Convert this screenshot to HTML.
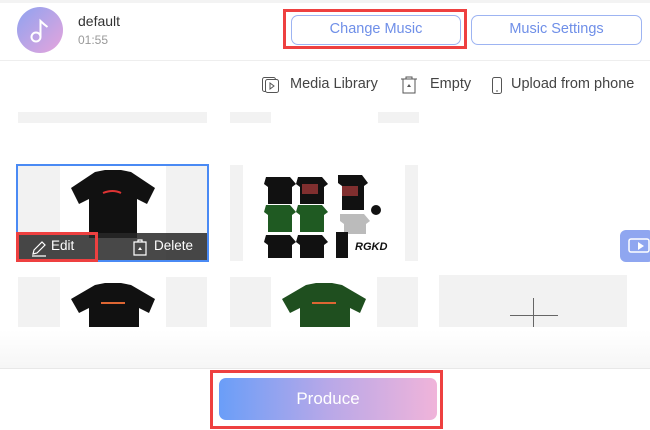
<!DOCTYPE html>
<html><head><meta charset="utf-8"><style>
*{margin:0;padding:0;box-sizing:border-box}
body{width:650px;height:430px;background:#fff;position:relative;overflow:hidden;font-family:"Liberation Sans",sans-serif}
.a{position:absolute}
.btn{position:absolute;border:1.5px solid #9db4f2;border-radius:7px;color:#6f8fe8;font-size:14.5px;text-align:center;line-height:27px;background:#fff}
.red{position:absolute;border:3px solid #ee4040}
.g{background:#f2f2f2;position:absolute}
.tb{position:absolute;top:76px;font-size:14.5px;color:#444}
</style></head><body>
<div class="a" style="left:0;top:0;width:650px;height:3px;background:#f3f3f3"></div>
<div class="a" style="left:17px;top:7px;width:46px;height:46px;border-radius:50%;background:linear-gradient(135deg,#8fa3f0,#e6a4dc)"></div>
<svg class="a" style="left:28px;top:18px" width="24" height="26" viewBox="0 0 24 26"><circle cx="8" cy="19" r="4.5" fill="none" stroke="#fff" stroke-width="2"/><path d="M12.5 19V3q3 3 7 6" fill="none" stroke="#fff" stroke-width="2"/></svg>
<div class="a" style="left:78px;top:13px;font-size:14px;color:#333">default</div>
<div class="a" style="left:78px;top:33px;font-size:12px;color:#999">01:55</div>
<div class="red" style="left:283px;top:9px;width:184px;height:40px"></div>
<div class="btn" style="left:291px;top:15px;width:170px;height:30px">Change Music</div>
<div class="btn" style="left:471px;top:15px;width:171px;height:30px">Music Settings</div>
<div class="a" style="left:0;top:60px;width:650px;height:1px;background:#eee"></div>
<svg class="a" style="left:261px;top:76px" width="20" height="18"><rect x="1.5" y="1.5" width="13" height="14" rx="2" fill="none" stroke="#555"/><rect x="4.5" y="3.5" width="13" height="13" rx="2" fill="#fff" stroke="#555"/><path d="M9 7l4 3-4 3z" fill="none" stroke="#555"/></svg>
<div class="tb" style="left:290px">Media Library</div>
<svg class="a" style="left:400px;top:75px" width="18" height="20"><path d="M3 4h12v14H3zM1 4h16M6 4V2h6v2" fill="none" stroke="#555"/><path d="M9 9l2 3H7z" fill="#555"/></svg>
<div class="tb" style="left:430px">Empty</div>
<svg class="a" style="left:491px;top:76px" width="12" height="20"><rect x="1.5" y="1.5" width="9" height="16" rx="2" fill="none" stroke="#555"/><path d="M5 15h2" stroke="#555"/></svg>
<div class="tb" style="left:511px">Upload from phone</div>
<div class="g" style="left:18px;top:112px;width:189px;height:11px"></div>
<div class="g" style="left:230px;top:112px;width:41px;height:11px"></div>
<div class="g" style="left:378px;top:112px;width:41px;height:11px"></div>

<div class="g" style="left:17px;top:165px;width:191px;height:96px"></div>
<div class="a" style="left:60px;top:166px;width:106px;height:94px;background:#fff"></div>
<svg class="a" style="left:65px;top:168px" width="96" height="70" viewBox="0 0 96 70"><path d="M30 4l10-2h16l10 2 24 16-8 16-10-5v39H24V31l-10 5L6 20z" fill="#111"/><path d="M38 25q10-4 18 0" stroke="#d33" stroke-width="2" fill="none"/></svg>
<div class="a" style="left:17px;top:233px;width:191px;height:28px;background:rgba(40,40,40,.85)"></div>
<div class="a" style="left:16px;top:164px;width:193px;height:98px;border:2px solid #4a8af4"></div>
<svg class="a" style="left:30px;top:239px" width="18" height="18"><path d="M3 15l1-4 8-8 3 3-8 8zM2 17h14" fill="none" stroke="#fff" stroke-width="1.2"/></svg>
<div class="a" style="left:51px;top:238px;font-size:13.5px;color:#fff">Edit</div>
<svg class="a" style="left:132px;top:238px" width="16" height="18"><path d="M2 4h12v13H2zM6 4V2h4v2" fill="none" stroke="#fff" stroke-width="1.2"/><path d="M8 9l2 3H6z" fill="#fff"/></svg>
<div class="a" style="left:154px;top:238px;font-size:13.5px;color:#fff">Delete</div>
<div class="red" style="left:16px;top:232px;width:82px;height:30px"></div>

<div class="g" style="left:230px;top:165px;width:188px;height:96px"></div>
<div class="a" style="left:243px;top:165px;width:162px;height:96px;background:#fff"></div>
<svg class="a" style="left:262px;top:174px" width="130" height="84" viewBox="0 0 130 84">
<g fill="#111"><path d="M4 3h24l6 7-4 3v17H6V13l-4-3z"/><path d="M36 3h24l6 7-4 3v17H38V13l-4-3z"/><path d="M76 1h24l6 8-4 3v24H80V12l-4-3z"/></g>
<g fill="#1f5a22"><path d="M4 31h24l6 7-4 3v17H6V41l-4-3z"/><path d="M36 31h24l6 7-4 3v17H38V41l-4-3z"/></g>
<path d="M78 40h24l6 7-4 3v10H82V50l-4-3z" fill="#bbb"/><circle cx="114" cy="36" r="5" fill="#111"/>
<g fill="#111"><path d="M4 61h24l6 7-4 3v13H6V71l-4-3z"/><path d="M36 61h24l6 7-4 3v13H38V71l-4-3z"/><rect x="74" y="58" width="12" height="26"/></g>
<path d="M40 10h16v10H40zM80 12h16v10H80z" fill="#c44" opacity=".6"/>
<text x="93" y="76" font-size="11" font-weight="bold" font-style="italic" fill="#111">RGKD</text></svg>
<div class="a" style="left:620px;top:230px;width:34px;height:32px;border-radius:6px;background:#8fa6f0"></div>
<svg class="a" style="left:628px;top:238px" width="22" height="18"><rect x="1" y="1" width="20" height="13" rx="2" fill="none" stroke="#fff" stroke-width="1.5"/><path d="M10 4l6 4-6 4z" fill="#fff"/></svg>

<div class="g" style="left:18px;top:277px;width:189px;height:50px"></div>
<div class="a" style="left:60px;top:277px;width:106px;height:50px;background:#fff"></div>
<svg class="a" style="left:65px;top:283px" width="96" height="44"><path d="M30 2l10-2h16l10 2 24 14-6 14-10-5v19H24V25l-10 5L6 16z" fill="#111"/><path d="M36 20h24" stroke="#d63" stroke-width="2"/></svg>
<div class="g" style="left:230px;top:277px;width:188px;height:50px"></div>
<div class="a" style="left:271px;top:277px;width:106px;height:50px;background:#fff"></div>
<svg class="a" style="left:276px;top:283px" width="96" height="44"><path d="M30 2l10-2h16l10 2 24 14-6 14-10-5v19H24V25l-10 5L6 16z" fill="#1f4f1f"/><path d="M36 20h24" stroke="#d63" stroke-width="2"/></svg>
<div class="g" style="left:439px;top:275px;width:188px;height:52px"></div>
<div class="a" style="left:510px;top:315px;width:48px;height:1px;background:#666"></div>
<div class="a" style="left:533px;top:298px;width:1px;height:29px;background:#666"></div>

<div class="a" style="left:0;top:330px;width:650px;height:38px;background:linear-gradient(#fff,#f6f6f6)"></div>
<div class="a" style="left:0;top:368px;width:650px;height:1px;background:#e8e8e8"></div>
<div class="red" style="left:210px;top:370px;width:233px;height:59px"></div>
<div class="a" style="left:219px;top:378px;width:218px;height:42px;border-radius:7px;background:linear-gradient(90deg,#6a9ef8,#b8a8e8,#f0b4da);color:#fff;font-size:17px;text-align:center;line-height:42px">Produce</div>
</body></html>
